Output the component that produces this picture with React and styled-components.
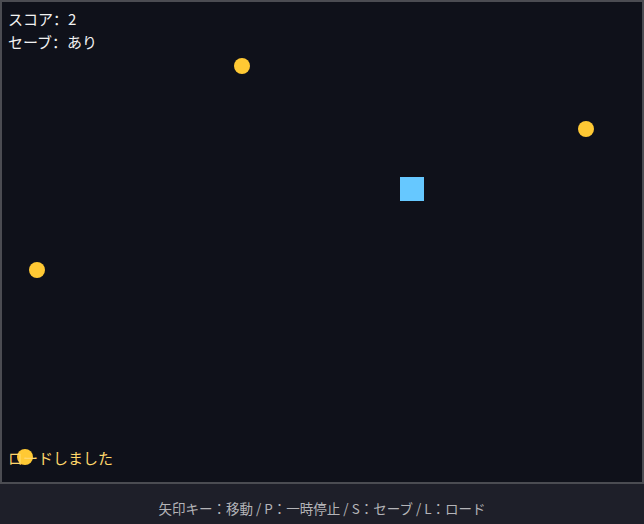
import React from "react";
import styled, { createGlobalStyle } from "styled-components";

const Global = createGlobalStyle`
  html, body { margin: 0; padding: 0; background: #1e1f29; }
  body { font-family: "Noto Sans CJK JP", "Noto Sans", sans-serif; }
`;

const Page = styled.div`
  width: 644px;
  display: flex;
  flex-direction: column;
`;

const Board = styled.div`
  position: relative;
  width: 640px;
  height: 480px;
  border: 2px solid #4b4c52;
  background: #0f111a;
  overflow: hidden;
`;

const Overlay = styled.div`
  position: absolute;
  inset: 0;
  box-sizing: border-box;
  padding: 5px 6px 13px;
  display: flex;
  flex-direction: column;
  justify-content: space-between;
  font-family: "Noto Sans CJK SC", "Noto Sans CJK JP", sans-serif;
  font-size: 15px;
  line-height: 23px;
  pointer-events: none;
`;

const Hud = styled.div`
  display: flex;
  flex-direction: column;
  color: #f2f2f2;
`;

const Message = styled.div`
  color: #ffd76a;
`;

const Coin = styled.div`
  position: absolute;
  width: 16px;
  height: 16px;
  border-radius: 50%;
  background: #ffc934;
  transform: translate(-50%, -50%);
`;

const Player = styled.div`
  position: absolute;
  width: 24px;
  height: 24px;
  background: #66c8ff;
`;

const Footer = styled.div`
  height: 40px;
  box-sizing: border-box;
  padding-top: 15px;
  text-align: center;
  color: #b4b4b8;
  font-size: 13.5px;
  line-height: 18px;
`;

const coins = [
  { x: 240, y: 64 },
  { x: 584, y: 127 },
  { x: 35, y: 268 },
  { x: 23, y: 455 },
];

export default function App() {
  return (
    <>
      <Global />
      <Page>
        <Board>
          {coins.map((c, i) => (
            <Coin key={i} style={{ left: c.x, top: c.y }} />
          ))}
          <Player style={{ left: 398, top: 175 }} />
          <Overlay>
            <Hud>
              <span>スコア：2</span>
              <span>セーブ：あり</span>
            </Hud>
            <Message>ロードしました</Message>
          </Overlay>
        </Board>
        <Footer lang="ja">矢印キー：移動 / P：一時停止 / S：セーブ / L：ロード</Footer>
      </Page>
    </>
  );
}
